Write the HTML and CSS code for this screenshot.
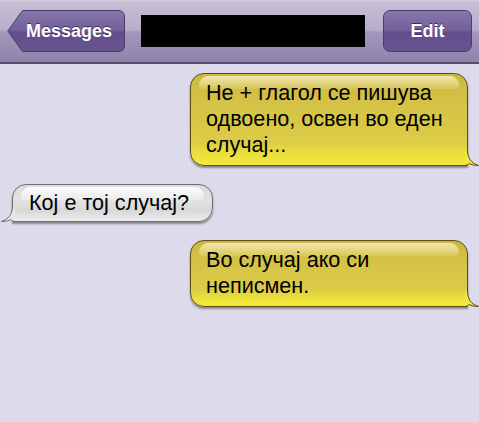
FILE: index.html
```html
<!DOCTYPE html>
<html>
<head>
<meta charset="utf-8">
<link rel="stylesheet" href="styles.css">
</head>
<body>
<div class="header">
  <div class="back-btn">
    <svg class="btn-shape" width="118" height="42" viewBox="0 0 118 42">
      <defs>
        <linearGradient id="bg1" x1="0" y1="0" x2="0" y2="1">
          <stop offset="0" stop-color="#8877aa"/>
          <stop offset="0.5" stop-color="#715e9a"/>
          <stop offset="0.52" stop-color="#624e8c"/>
          <stop offset="1" stop-color="#67538f"/>
        </linearGradient>
      </defs>
      <path d="M0.8,21 L15,1.2 Q15.5,0.5 17,0.5 L111,0.5 Q117.5,0.5 117.5,7 L117.5,35 Q117.5,41.5 111,41.5 L17,41.5 Q15.5,41.5 15,40.8 Z" fill="url(#bg1)" stroke="#4a3c68" stroke-width="1"/>
    </svg>
    <span class="btn-label">Messages</span>
  </div>
  <div class="title-block"></div>
  <div class="edit-btn"><span class="btn-label">Edit</span></div>
</div>
<div class="thread">
  <div class="bubble out">
    <p>Не + глагол се пишува одвоено, освен во еден случај...</p>
    <svg class="tail" width="14" height="16" viewBox="0 0 14 16"><path d="M0,0 L2.5,0 C2.5,8 6,13 13.5,15.5 C9,15.5 6,14.5 4,13.5 C3,14.8 1.5,15.5 0,15.5 Z" fill="#f1e83a"/><path d="M2.5,0 C2.5,8 6,13 13.5,15.5 C9,15.5 6,14.5 4,13.5 C3,14.8 1.5,15.5 0,15.5" fill="none" stroke="#5b4d16" stroke-width="1"/></svg>
  </div>
  <div class="bubble in">
    <p>Кој е тој случај?</p>
    <svg class="tail" width="14" height="16" viewBox="0 0 14 16"><path d="M0,0 L2.5,0 C2.5,8 6,13 13.5,15.5 C9,15.5 6,14.5 4,13.5 C3,14.8 1.5,15.5 0,15.5 Z" fill="#e9e9e9"/><path d="M2.5,0 C2.5,8 6,13 13.5,15.5 C9,15.5 6,14.5 4,13.5 C3,14.8 1.5,15.5 0,15.5" fill="none" stroke="#6e6e6e" stroke-width="1"/></svg>
  </div>
  <div class="bubble out">
    <p>Во случај ако си<br>неписмен.</p>
    <svg class="tail" width="14" height="16" viewBox="0 0 14 16"><path d="M0,0 L2.5,0 C2.5,8 6,13 13.5,15.5 C9,15.5 6,14.5 4,13.5 C3,14.8 1.5,15.5 0,15.5 Z" fill="#f1e83a"/><path d="M2.5,0 C2.5,8 6,13 13.5,15.5 C9,15.5 6,14.5 4,13.5 C3,14.8 1.5,15.5 0,15.5" fill="none" stroke="#5b4d16" stroke-width="1"/></svg>
  </div>
</div>
</body>
</html>
```

FILE: styles.css
```css
html, body {
  margin: 0;
  padding: 0;
}
body {
  background: #dddbeb;
  font-family: "Liberation Sans", Arial, sans-serif;
  width: 479px;
  height: 422px;
  overflow: hidden;
}
.header {
  height: 62px;
  border-bottom: 2px solid #574d6d;
  background: linear-gradient(to bottom, #d6d1e2 0px, #c6bfd7 2px, #b7aecb 30px, #a397bd 32px, #8f83ab 62px);
  display: flex;
  align-items: center;
  padding: 0 7px;
  box-sizing: content-box;
}
.back-btn {
  position: relative;
  width: 118px;
  height: 42px;
  display: flex;
  align-items: center;
  justify-content: center;
  padding-left: 6px;
  box-sizing: border-box;
}
.btn-shape {
  position: absolute;
  left: 0;
  top: 0;
}
.btn-label {
  position: relative;
  color: #fff;
  font-weight: bold;
  font-size: 18px;
  text-shadow: 0 -1px 0 #3d3058;
}
.title-block {
  width: 224px;
  height: 32px;
  background: #000;
  margin-left: 16px;
}
.edit-btn {
  margin-left: 18px;
  width: 89px;
  height: 42px;
  box-sizing: border-box;
  border: 1px solid #4a3c68;
  border-radius: 7px;
  background: linear-gradient(to bottom, #8877aa 0%, #715e9a 50%, #624e8c 52%, #67538f 100%);
  display: flex;
  align-items: center;
  justify-content: center;
}
.thread {
  display: flex;
  flex-direction: column;
  gap: 18px;
  padding-top: 9px;
}
.bubble {
  position: relative;
  box-sizing: border-box;
  border-radius: 14px;
  box-shadow: 0 2px 2px rgba(40, 30, 40, 0.45);
}
.bubble p {
  position: relative;
  margin: 0;
  font-size: 21.6px;
  line-height: 26px;
  color: #000;
}
.bubble::before {
  content: "";
  position: absolute;
  left: 8px;
  right: 8px;
  top: 2px;
  height: 13px;
  border-radius: 10px 10px 4px 4px;
}
.out {
  margin-left: 190px;
  width: 278px;
  padding: 6px 10px 7px 15px;
  border: 1px solid #5b4d16;
  border-bottom-right-radius: 0;
  background: linear-gradient(to bottom, #cdb83f 0%, #d6c447 40%, #dccc45 75%, #ebe03b 88%, #f3ea3a 100%);
}
.out::before {
  background: linear-gradient(to bottom, rgba(255,250,220,0.75), rgba(255,245,200,0.15));
}
.out .tail {
  position: absolute;
  right: -12px;
  bottom: -1px;
}
.in {
  align-self: flex-start;
  margin-left: 12px;
  width: 201px;
  padding: 5px 8px 5px 16px;
  border: 1px solid #6e6e6e;
  border-bottom-left-radius: 0;
  background: linear-gradient(to bottom, #dcdcdc 0%, #e2e2e2 45%, #d7d7d7 70%, #e6e6e6 90%, #efefef 100%);
}
.in::before {
  background: linear-gradient(to bottom, rgba(255,255,255,0.95), rgba(255,255,255,0.3));
}
.in .tail {
  position: absolute;
  left: -12px;
  bottom: -1px;
  transform: scaleX(-1);
}
```
